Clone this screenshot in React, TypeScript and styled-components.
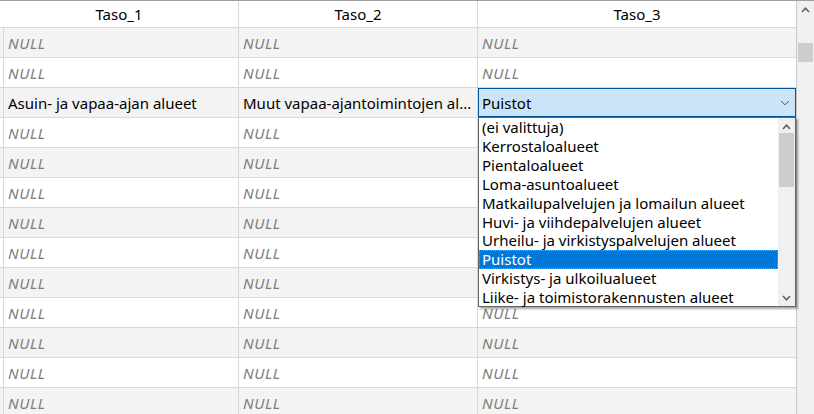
import React from "react";
import styled, { createGlobalStyle } from "styled-components";

const Global = createGlobalStyle`
  html, body { margin: 0; padding: 0; background: #ffffff; overflow: hidden; }
  body { font-family: "Noto Sans", "Open Sans", sans-serif; font-size: 15px; color: #000; }
  * { box-sizing: border-box; }
`;

const Viewport = styled.div`
  width: 814px;
  height: 414px;
  overflow: hidden;
  display: flex;
  border-top: 1px solid #a0a0a0;
`;

const TableArea = styled.div`
  flex: 1;
  display: flex;
  flex-direction: column;
  min-width: 0;
`;

const HeaderRow = styled.div`
  display: grid;
  grid-template-columns: 239px 239px 1fr;
  height: 27px;
  border-bottom: 1px solid #d8d8d8;
  background: #ffffff;
  flex: none;
`;

const HeaderCell = styled.div<{ $last?: boolean }>`
  display: flex;
  align-items: center;
  justify-content: center;
  border-right: ${(p) => (p.$last ? "none" : "1px solid #d8d8d8")};
  color: #000;
  white-space: nowrap;
`;

const Row = styled.div<{ $alt: boolean }>`
  display: grid;
  grid-template-columns: 4px 235px 239px 1fr;
  height: 30px;
  flex: none;
  background: ${(p) => (p.$alt ? "#f3f3f3" : "#ffffff")};
`;

const Stub = styled.div`
  border-right: 1px solid #d8d8d8;
  border-bottom: 1px solid #d8d8d8;
`;

const Cell = styled.div<{ $last?: boolean; $null?: boolean }>`
  display: flex;
  align-items: center;
  padding-left: 4px;
  border-right: ${(p) => (p.$last ? "none" : "1px solid #d8d8d8")};
  border-bottom: 1px solid #d8d8d8;
  white-space: nowrap;
  overflow: hidden;
  color: ${(p) => (p.$null ? "#7c7c7c" : "#000")};
  font-style: ${(p) => (p.$null ? "italic" : "normal")};
  letter-spacing: ${(p) => (p.$null ? "0.6px" : "0")};
`;

const EditorCell = styled.div`
  position: relative;
  border-bottom: 1px solid #d8d8d8;
`;

const Combo = styled.div`
  height: 29px;
  display: flex;
  align-items: center;
  justify-content: space-between;
  padding: 0 5px 0 3px;
  background: #cce4f7;
  border: 1px solid #005499;
  color: #000;
`;

const Popup = styled.div`
  position: absolute;
  left: 0;
  top: 29px;
  width: 318px;
  height: 190px;
  background: #ffffff;
  border: 1px solid #646464;
  box-shadow: 2px 2px 2px rgba(0, 0, 0, 0.35);
  display: flex;
  z-index: 5;
`;

const List = styled.div`
  flex: 1;
  display: flex;
  flex-direction: column;
  min-width: 0;
`;

const Item = styled.div<{ $sel?: boolean }>`
  height: 18.85px;
  flex: none;
  display: flex;
  align-items: center;
  padding-left: 3px;
  white-space: nowrap;
  background: ${(p) => (p.$sel ? "#0078d7" : "transparent")};
  color: ${(p) => (p.$sel ? "#ffffff" : "#000")};
  outline: ${(p) => (p.$sel ? "1px dotted #f08a24" : "none")};
  outline-offset: -1px;
`;

const VScroll = styled.div<{ $border?: boolean }>`
  width: ${(p) => (p.$border ? "18px" : "17px")};
  flex: none;
  background: #f0f0f0;
  border-left: ${(p) => (p.$border ? "1px solid #c8c8c8" : "none")};
  position: relative;
`;

const Thumb = styled.div`
  position: absolute;
  left: 1px;
  right: 1px;
  background: #cdcdcd;
`;

const ArrowBox = styled.div<{ $bottom?: boolean }>`
  position: absolute;
  left: 0;
  right: 0;
  height: 17px;
  ${(p) => (p.$bottom ? "bottom: 0;" : "top: 0;")}
  display: flex;
  align-items: center;
  justify-content: center;
`;

const Chevron = ({ dir, color = "#606060", w = 7, sw = 1.6 }: { dir: "up" | "down"; color?: string; w?: number; sw?: number }) => (
  <svg width={w + 2} height={6} viewBox={`0 0 ${w + 2} 6`}>
    {dir === "up" ? (
      <polyline points={`1,5 ${(w + 2) / 2},1.2 ${w + 1},5`} fill="none" stroke={color} strokeWidth={sw} />
    ) : (
      <polyline points={`1,1 ${(w + 2) / 2},4.8 ${w + 1},1`} fill="none" stroke={color} strokeWidth={sw} />
    )}
  </svg>
);

const Scrollbar = ({ thumbTop, thumbH, border, showDown }: { thumbTop: number; thumbH: number; border?: boolean; showDown?: boolean }) => (
  <VScroll $border={border}>
    <ArrowBox>
      <Chevron dir="up" />
    </ArrowBox>
    <Thumb style={{ top: thumbTop, height: thumbH }} />
    {showDown && (
      <ArrowBox $bottom>
        <Chevron dir="down" />
      </ArrowBox>
    )}
  </VScroll>
);

const options = [
  "(ei valittuja)",
  "Kerrostaloalueet",
  "Pientaloalueet",
  "Loma-asuntoalueet",
  "Matkailupalvelujen ja lomailun alueet",
  "Huvi- ja viihdepalvelujen alueet",
  "Urheilu- ja virkistyspalvelujen alueet",
  "Puistot",
  "Virkistys- ja ulkoilualueet",
  "Liike- ja toimistorakennusten alueet",
];

type RowData = { c1: string | null; c2: string | null; editor?: boolean; covered?: boolean };

const rows: RowData[] = [
  { c1: null, c2: null },
  { c1: null, c2: null },
  { c1: "Asuin- ja vapaa-ajan alueet", c2: "Muut vapaa-ajantoimintojen al...", editor: true },
  ...Array.from({ length: 10 }, (_, k) => ({ c1: null, c2: null, covered: k < 6 })),
];

const Value = ({ v, last, hidden }: { v: string | null; last?: boolean; hidden?: boolean }) => (
  <Cell $null={v === null} $last={last}>
    {hidden ? "" : v === null ? "NULL" : v}
  </Cell>
);

export default function App() {
  return (
    <>
      <Global />
      <Viewport>
        <TableArea>
          <HeaderRow>
            <HeaderCell>Taso_1</HeaderCell>
            <HeaderCell>Taso_2</HeaderCell>
            <HeaderCell $last>Taso_3</HeaderCell>
          </HeaderRow>
          {rows.map((r, i) => (
            <Row key={i} $alt={i % 2 === 0}>
              <Stub />
              <Value v={r.c1} />
              <Value v={r.c2} />
              {r.editor ? (
                <EditorCell>
                  <Combo>
                    <span>Puistot</span>
                    <Chevron dir="down" color="#5a5a5a" w={8} sw={1} />
                  </Combo>
                  <Popup>
                    <List>
                      {options.map((o) => (
                        <Item key={o} $sel={o === "Puistot"}>
                          {o}
                        </Item>
                      ))}
                    </List>
                    <Scrollbar thumbTop={15} thumbH={54} showDown />
                  </Popup>
                </EditorCell>
              ) : (
                <Value v={null} last hidden={r.covered} />
              )}
            </Row>
          ))}
        </TableArea>
        <Scrollbar thumbTop={42} thumbH={19} border />
      </Viewport>
    </>
  );
}
